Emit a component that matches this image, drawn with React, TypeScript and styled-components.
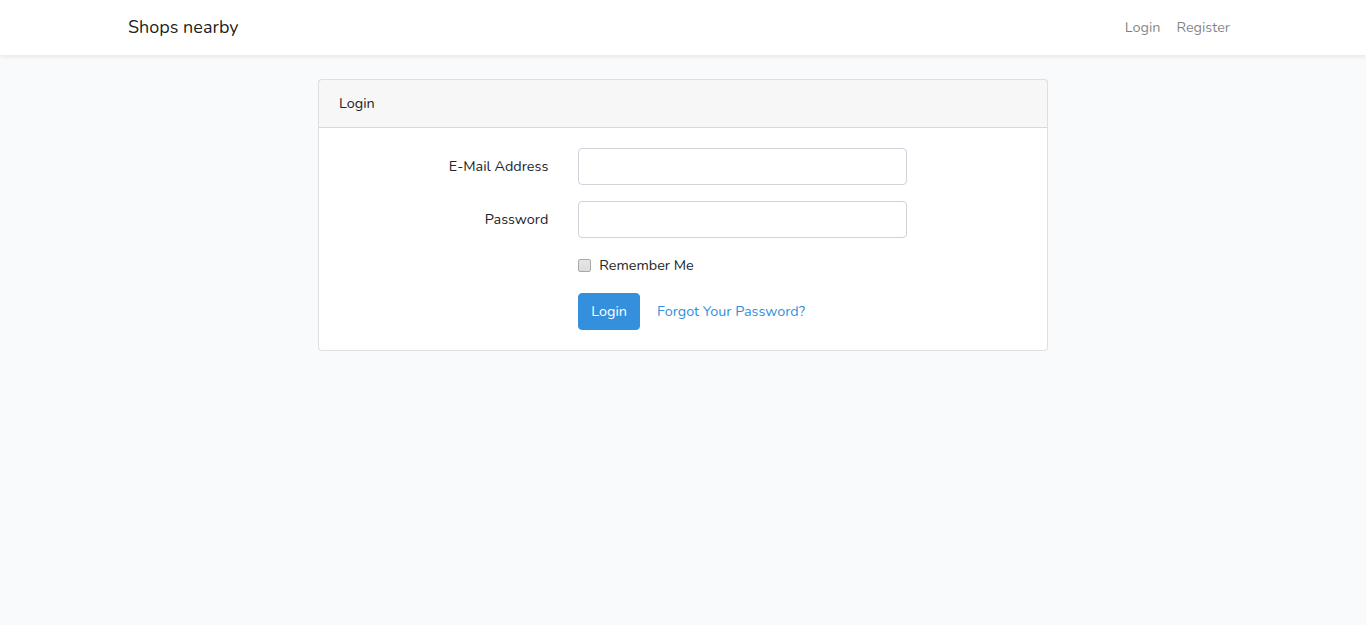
import React from "react";
import styled, { createGlobalStyle } from "styled-components";

const Global = createGlobalStyle`
  html { font-size: 16px; }
  body {
    margin: 0;
    background: #f8fafc;
    font-family: "Nunito", "Lato", "Noto Sans", sans-serif;
    font-size: 14.4px;
    line-height: 1.6;
    color: #212529;
  }
  * { box-sizing: border-box; }
`;

const Navbar = styled.nav`
  background: #fff;
  box-shadow: 0 0.125rem 0.25rem rgba(0, 0, 0, 0.075);
  padding: 8px 0;
`;

const Container = styled.div`
  max-width: 1140px;
  margin: 0 auto;
  padding: 0 15px;
  display: flex;
  align-items: center;
  justify-content: space-between;
`;

const Brand = styled.a`
  font-size: 18px;
  line-height: 1.6;
  color: rgba(0, 0, 0, 0.9);
  text-decoration: none;
  padding: 5px 0;
`;

const NavList = styled.div`
  display: flex;
`;

const NavLink = styled.a`
  color: rgba(0, 0, 0, 0.5);
  text-decoration: none;
  padding: 8px;
`;

const Main = styled.main`
  padding: 24px 0;
  display: flex;
  justify-content: center;
`;

const Card = styled.div`
  width: 730px;
  background: #fff;
  border: 1px solid rgba(0, 0, 0, 0.125);
  border-radius: 4px;
`;

const CardHeader = styled.div`
  padding: 12px 20px;
  background: rgba(0, 0, 0, 0.03);
  border-bottom: 1px solid rgba(0, 0, 0, 0.125);
`;

const CardBody = styled.div`
  padding: 20px 20px;
`;

const Row = styled.div<{ $last?: boolean }>`
  display: grid;
  grid-template-columns: 209.33px 329px;
  column-gap: 30px;
  margin-bottom: ${(p) => (p.$last ? "0" : "16px")};
  align-items: start;
`;

const Label = styled.label`
  text-align: right;
  padding-top: 7px;
  padding-bottom: 7px;
`;

const Input = styled.input`
  display: block;
  width: 100%;
  height: 37px;
  padding: 6px 12px;
  font: inherit;
  color: #495057;
  background: #fff;
  border: 1px solid #ced4da;
  border-radius: 4px;
`;

const Check = styled.div`
  grid-column: 2;
  display: flex;
  align-items: center;
  gap: 8px;
  height: 23px;
`;

const Checkbox = styled.input`
  appearance: none;
  -webkit-appearance: none;
  width: 13px;
  height: 13px;
  margin: 0;
  border: 1px solid #a9a9a9;
  border-radius: 2px;
  background: linear-gradient(#e6e6e6, #dcdcdc);
`;

const Actions = styled.div`
  grid-column: 2;
  display: flex;
  align-items: center;
`;

const Button = styled.button`
  height: 37px;
  padding: 6px 12px;
  font: inherit;
  color: #fff;
  background: #3490dc;
  border: 1px solid #3490dc;
  border-radius: 4px;
`;

const LinkBtn = styled.a`
  padding: 6px 17px;
  color: #3490dc;
  text-decoration: none;
`;

export default function App() {
  return (
    <>
      <Global />
      <Navbar>
        <Container>
          <Brand href="#">Shops nearby</Brand>
          <NavList>
            <NavLink href="#">Login</NavLink>
            <NavLink href="#">Register</NavLink>
          </NavList>
        </Container>
      </Navbar>
      <Main>
        <Card>
          <CardHeader>Login</CardHeader>
          <CardBody>
            <Row>
              <Label htmlFor="email">E-Mail Address</Label>
              <Input id="email" type="email" />
            </Row>
            <Row>
              <Label htmlFor="password">Password</Label>
              <Input id="password" type="password" />
            </Row>
            <Row>
              <Check>
                <Checkbox type="checkbox" id="remember" />
                <label htmlFor="remember">Remember Me</label>
              </Check>
            </Row>
            <Row $last>
              <Actions>
                <Button type="button">Login</Button>
                <LinkBtn href="#">Forgot Your Password?</LinkBtn>
              </Actions>
            </Row>
          </CardBody>
        </Card>
      </Main>
    </>
  );
}
